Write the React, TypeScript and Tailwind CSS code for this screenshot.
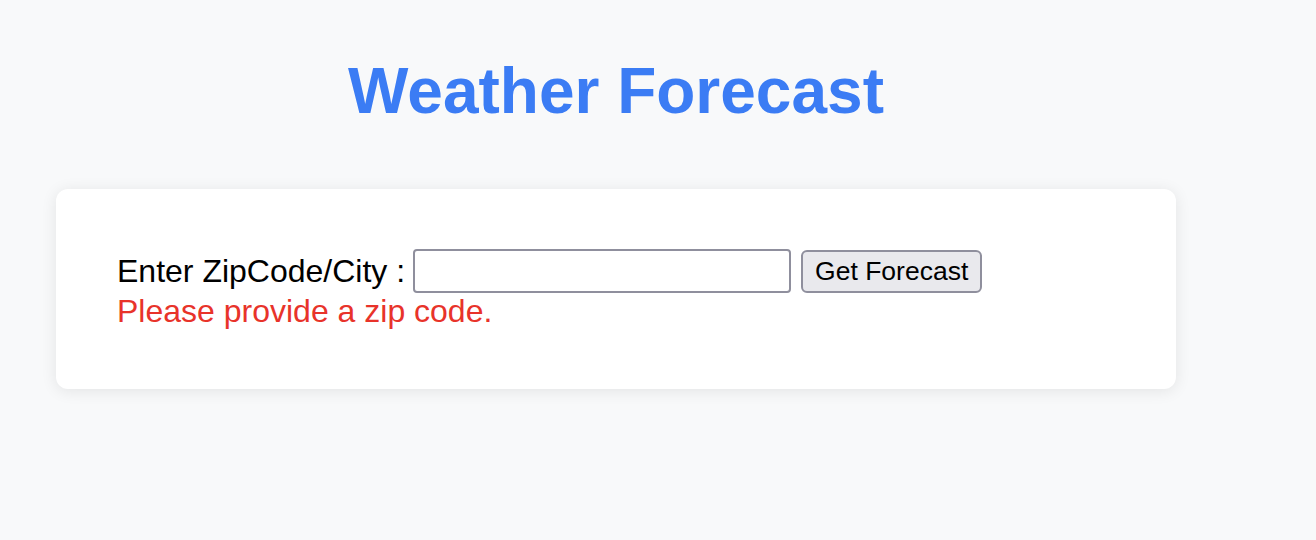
import { useState } from 'react';

const App = () => {
	const [zip, setZip] = useState('');

	return (
		<div className="min-h-screen bg-[#f8f9fa] pt-[54px] pl-[56px] font-['Liberation_Sans',Arial,sans-serif]">
			<div className="w-[1120px]">
				<h1 className="text-center text-[64px] leading-[74px] font-bold text-[#3b7cf4]">Weather Forecast</h1>

				<div className="mt-[61px] bg-white rounded-xl shadow-[0_2px_16px_rgba(0,0,0,0.09)] px-[61px] pt-[60px] pb-[59px]">
					<div className="flex items-center text-[32px] leading-[37px] text-black">
						<label htmlFor="zip" className="mr-[8px]">
							Enter ZipCode/City :
						</label>
						<input
							id="zip"
							value={zip}
							onChange={(e) => setZip(e.target.value)}
							className="w-[378px] h-[44px] px-2 text-[26px] bg-white border-2 border-[#8f8f9d] rounded-[4px] outline-none"
						/>
						<button className="ml-[10px] h-[43px] px-[12px] text-[26.5px] leading-none bg-[#e9e9ed] border-2 border-[#8f8f9d] rounded-[6px]">
							Get Forecast
						</button>
					</div>
					<p className="text-[32px] leading-[37px] text-[#e8332a]">Please provide a zip code.</p>
				</div>
			</div>
		</div>
	);
};

export default App;
